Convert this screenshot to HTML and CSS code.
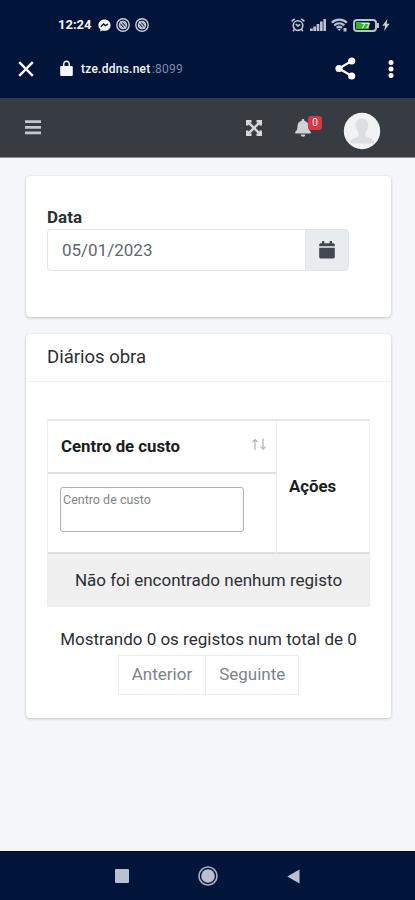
FILE: index.html
```html
<!DOCTYPE html>
<html lang="pt">
<head>
    <meta charset="UTF-8" />
    <meta name="viewport" content="width=device-width, initial-scale=1.0"/>
    <title>Diários obra</title>
    <link rel="stylesheet" href="styles.css">
</head>
<body>
    <header class="browser">
        <div class="status">
            <span class="clock">12:24</span>
            <svg class="messenger" width="13" height="13" viewBox="0 0 13 13">
                <path d="M6.5 .5C3 .5.4 3 .4 6.2c0 1.8.8 3.2 2 4.2v2.2l2-1.1c.7.2 1.4.3 2.1.3 3.5 0 6.1-2.5 6.1-5.6S10 .5 6.5.5z" fill="#f4f6fa"/>
                <path d="M2.9 7.8 5.5 5l1.800 1.600L10 5" fill="none" stroke="#001539" stroke-width="1.3"/>
            </svg>
            <svg class="ring" width="14" height="14" viewBox="0 0 14 14"><g fill="none" stroke="#c9ced8"><circle cx="7" cy="7" r="6.2" stroke-width="1.4"/><circle cx="7" cy="7" r="3.5" stroke-width="1.5"/><path d="M4 3.5 10 10.5M7 3.5l3 3.5M4 7l3 3.5" stroke-width="1.2"/></g></svg>
            <svg class="ring" width="14" height="14" viewBox="0 0 14 14"><g fill="none" stroke="#c9ced8"><circle cx="7" cy="7" r="6.2" stroke-width="1.4"/><circle cx="7" cy="7" r="3.5" stroke-width="1.5"/><path d="M4 3.5 10 10.5M7 3.5l3 3.5M4 7l3 3.5" stroke-width="1.2"/></g></svg>
            <svg class="alarm" width="14" height="14" viewBox="0 0 14 14">
                <g fill="none" stroke="#c3c8d2" stroke-width="1.6"><circle cx="7" cy="7.6" r="4.8"/><path d="M.6 3.4 3.7.9M13.4 3.4 10.3.9M4.7 6.2 7 8l2.200-1.600M3.400 11.400l-1.200 1.800M10.600 11.400l1.200 1.800"/></g>
            </svg>
            <svg class="signal" width="17" height="12" viewBox="0 0 17 12">
                <path d="M0 9.5h2.8V12H0zM3.3 7.5H6V12H3.3zM6.6 5h2.7v7H6.6zM10 2.5h2.7V12H10zM13.4 0H16v12h-2.6z" fill="#b9bfcb"/>
            </svg>
            <svg class="wifi" width="17" height="14" viewBox="0 0 17 14">
                <g fill="none" stroke="#b9bfcb" stroke-width="2.2"><path d="M.8 4.6c4.3-4 10.7-4 15 0M3.3 7.4c2.9-2.7 7.1-2.7 10 0M5.700 9.800c1.600-1.400 3.700-1.400 5.300 0"/></g>
                <path d="m8.3 13-2-2.2h4zM12.5 10h3v3.5h-3z" fill="#b9bfcb"/>
            </svg>
            <div class="battery"><div class="charge"></div><span>77</span></div>
            <svg class="bolt" width="8" height="12" viewBox="0 0 8 12"><path d="M5.4 0 .3 6.7h2.9L2 12l5.6-7.2H4.7z" fill="#c9ced8"/></svg>
        </div>
        <div class="address">
            <svg class="close" width="16" height="16" viewBox="0 0 16 16"><path d="M1.2 1.2l13.6 13.6M14.8 1.2 1.2 14.8" stroke="#f4f6fa" stroke-width="2.4"/></svg>
            <svg class="lock" width="13" height="17" viewBox="0 0 13 17"><path d="M1.5 6H3V4.3C3 2 4.5.5 6.5.5S10 2 10 4.3V6h1.5c.8 0 1.3.5 1.3 1.3v7.4c0 .8-.5 1.3-1.3 1.3h-10C.7 16 .2 15.500.2 14.700V7.300C.2 6.500.7 6 1.500 6zm3 0h4V4.300c0-1.400-.8-2.300-2-2.300s-2 .9-2 2.300z" fill="#f4f6fa" fill-rule="evenodd"/></svg>
            <span class="host">tze.ddns.net</span><span class="port">:8099</span>
            <svg class="share" width="21" height="23" viewBox="0 0 21 23">
                <path d="M16.7 4 4 11.5 16.7 19" fill="none" stroke="#fff" stroke-width="2.2"/>
                <g fill="#fff"><circle cx="16.7" cy="4" r="3.6"/><circle cx="4" cy="11.5" r="3.6"/><circle cx="16.7" cy="19" r="3.6"/></g>
            </svg>
            <svg class="dots" width="6" height="20" viewBox="0 0 6 20"><g fill="#fff"><circle cx="3" cy="3.5" r="2.5"/><circle cx="3" cy="10" r="2.5"/><circle cx="3" cy="16.5" r="2.5"/></g></svg>
        </div>
    </header>

    <nav class="navbar">
        <svg class="menu" width="16" height="15" viewBox="0 0 16 15"><path d="M0 1.7h16M0 7.3h16M0 12.8h16" stroke="#c2c7d0" stroke-width="2.7"/></svg>
        <svg class="expand" width="16" height="16" viewBox="0 0 16 16">
            <path d="M0 0h5.500v2.500H4.200L8 6.300l3.800-3.800h-1.300V0H16v5.500h-2.500V4.200L9.700 8l3.800 3.800v-1.300H16V16h-5.500v-2.500h1.300L8 9.700l-3.800 3.800h1.300V16H0v-5.500h2.500v1.300L6.300 8 2.500 4.200v1.300H0z" fill="#d5d7db"/>
        </svg>
        <div class="alerts">
            <svg width="16" height="18" viewBox="0 0 16 18"><path d="M8 0c.8 0 1.3.5 1.3 1.3v.5c2.5.5 4.2 2.5 4.2 5.2 0 3.4.9 4.5 2 5.6.8.8.3 2-.8 2H1.3c-1.1 0-1.6-1.2-.8-2 1.1-1.1 2-2.2 2-5.6 0-2.7 1.7-4.7 4.2-5.2v-.5C6.7.5 7.2 0 8 0zM5.8 15.5h4.4c0 1.3-.9 2.3-2.2 2.3s-2.2-1-2.2-2.3z" fill="#d0d2d5"/></svg>
            <span class="badge">0</span>
        </div>
        <svg class="avatar" width="38" height="38" viewBox="0 0 38 38">
            <circle cx="19" cy="19" r="18.2" fill="#f1f2f4"/>
            <path d="M19 6.5c4 0 6.3 2.6 6.3 6.6 0 3.3-1.1 6-3 7.6v2.5c0 1.2 1 1.8 3 2.4 3.3 1 5.4 2.2 6 5.9H6.7c.6-3.7 2.7-4.9 6-5.9 2-.6 3-1.2 3-2.4v-2.5c-1.9-1.6-3-4.3-3-7.6 0-4 2.3-6.6 6.3-6.6z" fill="#dcdee1"/>
        </svg>
    </nav>

    <main class="content">
        <section class="card date-card">
            <label class="label" for="data">Data</label>
            <div class="input-group">
                <input class="date" type="text" id="data" value="05/01/2023">
                <span class="addon">
                    <svg width="16" height="18" viewBox="0 0 16 18"><path d="M3 0h2.3v2.3h5.4V0H13v2.3h1.3c.9 0 1.5.6 1.5 1.5v1.5H.2V3.8c0-.9.6-1.5 1.5-1.5H3zM.2 6.7h15.6V16c0 .9-.6 1.5-1.5 1.5H1.7c-.9 0-1.5-.6-1.5-1.5z" fill="#414851"/></svg>
                </span>
            </div>
        </section>

        <section class="card">
            <h3 class="card-title">Diários obra</h3>
            <div class="card-body">
                <table class="table">
                    <thead>
                        <tr class="heads">
                            <th class="center"><div class="sort">Centro de custo
                                <svg width="16" height="13" viewBox="0 0 16 13"><path d="M4 12V1.5M1.5 4 4 1.5 6.5 4M12 .5V11M9.5 8.7 12 11.2l2.5-2.5" fill="none" stroke="#b3b3b3" stroke-width="1.2"/></svg>
                            </div></th>
                            <th class="actions" rowspan="2">Ações</th>
                        </tr>
                        <tr class="filters">
                            <th><input class="filter" type="text" placeholder="Centro de custo"></th>
                        </tr>
                    </thead>
                    <tbody>
                        <tr><td class="empty" colspan="2">Não foi encontrado nenhum registo</td></tr>
                    </tbody>
                </table>
                <div class="info">Mostrando 0 os registos num total de 0</div>
                <div class="pagination">
                    <span class="page">Anterior</span>
                    <span class="page">Seguinte</span>
                </div>
            </div>
        </section>
    </main>

    <footer class="softkeys">
        <svg width="14" height="14" viewBox="0 0 14 14"><rect width="14" height="14" rx="1" fill="#b9c0cf"/></svg>
        <svg width="20" height="20" viewBox="0 0 20 20"><circle cx="10" cy="10" r="9" fill="none" stroke="#a9b1c0" stroke-width="1.6"/><circle cx="10" cy="10" r="6.8" fill="#b9c0cf"/></svg>
        <svg width="13" height="15" viewBox="0 0 13 15"><path d="M12.5.5v14L.3 7.5z" fill="#b9c0cf"/></svg>
    </footer>
</body>
</html>
```
FILE: styles.css
```css
* { box-sizing: border-box; }
body { margin: 0; height: 900px; display: flex; flex-direction: column; background-color: #f4f6fa; color: #2b2f33; font-family: Roboto, sans-serif; font-size: 17px; line-height: 24px; overflow: hidden; }
svg { display: block; flex: none; }

/* Phone and browser bars */
.browser { height: 98px; flex: none; background-color: #001539; color: #f4f6fa; }
.status { display: flex; align-items: center; height: 50px; padding-left: 58px; }
.clock { width: 40px; font-size: 13px; font-weight: 700; }
.ring { margin-left: 5px; }
.alarm { margin-left: 142px; }
.signal { margin-left: 5px; }
.wifi { margin-left: 4px; }
.battery { position: relative; width: 24px; height: 13px; margin-left: 5px; padding: 1px; border: 2px solid #b9bfcb; border-radius: 4px; }
.battery::after { content: ""; position: absolute; right: -4px; top: 2px; width: 2px; height: 5px; background-color: #b9bfcb; }
.battery span { position: absolute; left: 6px; top: 0; font-size: 8px; line-height: 9px; font-weight: 700; }
.charge { width: 13px; height: 7px; background-color: #35b51c; }
.bolt { margin-left: 5px; }
.address { display: flex; align-items: center; height: 37px; padding-left: 18px; }
.lock { margin-left: 26px; margin-right: 8px; }
.host, .port { font-size: 12px; }
.host { width: 71px; font-weight: 500; letter-spacing: 0.25px; }
.port { width: 32px; color: #7f8aa3; letter-spacing: 0.2px; }
.share { margin-left: 151px; }
.dots { margin-left: 32px; }

.navbar { display: flex; align-items: center; height: 60px; flex: none; padding-left: 25px; background-color: #363c42; border-bottom: 1px solid #8b8f93; }
.expand { margin-left: 205px; }
.alerts { position: relative; width: 28px; margin-left: 33px; }
.badge { position: absolute; left: 13px; top: -3px; width: 14px; height: 14px; border-radius: 3px; background-color: #dc3545; color: #fff; font-size: 10px; line-height: 14px; text-align: center; }
.avatar { margin: 6px 0 0 20px; }

/* Cards */
.content { flex: 1; padding: 18px 24px 0 26px; }
.card { margin-bottom: 17px; background-color: #fff; border-radius: 4px; box-shadow: 0 0 1px rgba(0, 0, 0, .12), 0 1px 3px rgba(0, 0, 0, .2); }
.date-card { height: 141px; padding: 29px 21px 0; }
.label { display: block; font-weight: 700; }
.input-group { display: flex; width: 302px; height: 42px; }
.date { flex: 1; min-width: 0; padding: 0 14px; border: 1px solid #e2e5e8; border-right: none; border-radius: 4px 0 0 4px; color: #5f666d; font: 17px Roboto, sans-serif; }
.addon { display: flex; align-items: center; justify-content: center; width: 44px; background-color: #e9ecef; border: 1px solid #e1e5e9; border-radius: 0 4px 4px 0; }
.card-title { margin: 0; height: 48px; padding-left: 21px; border-bottom: 1px solid #f0f0f0; font-size: 18.5px; font-weight: 400; line-height: 47px; }
.card-body { height: 336px; padding: 37px 21px 0; }

/* Table */
.table { width: 323px; border-collapse: separate; border-spacing: 0; table-layout: fixed; border: 1px solid #eceef0; border-top: 2px solid #e5e6e7; border-bottom: none; }
th, td { padding: 0; }
th { text-align: left; font-weight: 700; color: #1a1d20; }
.heads { height: 53px; }
.filters { height: 80px; }
.center { width: 228px; padding: 0 9px 2px 13px; border-bottom: 2px solid #dfe1e3; }
.sort { display: flex; align-items: center; justify-content: space-between; font-size: 16.8px; }
.sort svg { margin-bottom: 2px; }
.actions { padding: 0 0 2px 12px; border-left: 1px solid #eceef0; border-bottom: 2px solid #dcdee1; font-size: 16.8px; }
.filters th:first-child { padding: 0 0 8px 12px; border-bottom: 2px solid #dcdee1; }
.filter { display: block; width: 184px; height: 45px; padding: 0 2px 19px; border: 1px solid #b2b2b2; border-radius: 3px; font: 12.5px Roboto, sans-serif; }
.filter::placeholder { color: #858585; }
.empty { height: 53px; padding-bottom: 2px; background-color: #f0f0f0; text-align: center; }
.info { margin-top: 20px; text-align: center; white-space: nowrap; }
.pagination { display: flex; justify-content: center; margin-top: 4px; }
.page { height: 40px; padding: 0 13px; border: 1px solid #e9ecef; color: #7c8389; line-height: 37px; }
.page + .page { margin-left: -1px; }

.softkeys { display: flex; align-items: center; justify-content: center; gap: 69px; height: 49px; flex: none; background-color: #001539; border-top: 1px solid #05070e; }
```
